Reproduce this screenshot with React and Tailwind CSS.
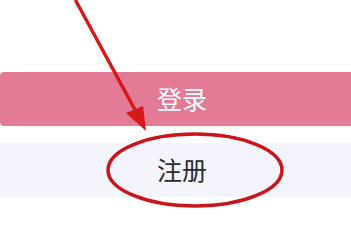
const Annotations = () => (
  <svg className="absolute inset-0 pointer-events-none" width="351" height="210" viewBox="0 0 351 210">
    {/* arrow */}
    <line x1="76" y1="1" x2="140" y2="119" stroke="#d51818" strokeWidth="3.5" strokeLinecap="round" />
    <polygon points="146,131 126,113 143,106" fill="#d51818" />
    {/* circle round the register button */}
    <ellipse cx="195" cy="170" rx="87" ry="36" fill="none" stroke="#c8161c" strokeWidth="3.5" />
  </svg>
);

export default function App() {
  return (
    <div
      className="relative w-[351px] h-[210px] overflow-hidden bg-white"
      style={{ fontFamily: '"Noto Sans CJK SC", "Noto Sans", sans-serif' }}
    >
      <div className="flex flex-col gap-[17px] pt-[72px]">
        <button className="h-[54px] w-full rounded-l-[4px] bg-[#e37a96] pl-[13px] text-[25px] text-white flex items-center justify-center">
          登录
        </button>
        <button className="h-[54px] w-full bg-[#f4f4fc] pl-[13px] text-[25px] text-[#2b2b2b] flex items-center justify-center">
          注册
        </button>
      </div>
      <Annotations />
    </div>
  );
}
